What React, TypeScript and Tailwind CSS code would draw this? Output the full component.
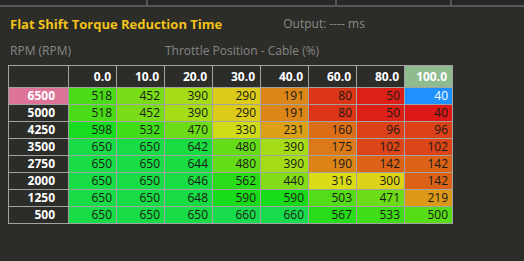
import React from "react";

const rpm = [6500, 5000, 4250, 3500, 2750, 2000, 1250, 500];
const tps = ["0.0", "10.0", "20.0", "30.0", "40.0", "60.0", "80.0", "100.0"];
const table: number[][] = [
  [518, 452, 390, 290, 191, 80, 50, 40],
  [518, 452, 390, 290, 191, 80, 50, 40],
  [598, 532, 470, 330, 231, 160, 96, 96],
  [650, 650, 642, 480, 390, 175, 102, 102],
  [650, 650, 644, 480, 390, 190, 142, 142],
  [650, 650, 646, 562, 440, 316, 300, 142],
  [650, 650, 648, 590, 590, 503, 471, 219],
  [650, 650, 650, 660, 660, 567, 533, 500],
];

const MIN = 40;
const MAX = 660;

// red (low) -> yellow -> green (high)
function cellColor(v: number) {
  const t = Math.max(0, Math.min(1, (v - MIN) / (MAX - MIN)));
  const hue = t * 136;
  return `hsl(${hue.toFixed(1)}, 80%, 48%)`;
}

export default function App() {
  const font = { fontFamily: '"Open Sans", "Noto Sans", sans-serif' };
  return (
    <div className="w-[524px] h-[261px] bg-[#2c2c28] overflow-hidden" style={font}>
      {/* tab strip */}
      <div className="flex h-[5px] bg-[#272725]">
        <div className="w-[148px] border-r-2 border-[#555555]" />
        <div className="w-[189px] border-r-2 border-[#555555]" />
        <div className="w-[115px] border-r-2 border-[#555555]" />
        <div className="flex-1" />
      </div>
      <div className="h-[2px] bg-[#575757]" />

      <div className="pl-[10px] pt-[8px] flex items-center h-[26px]">
        <span className="text-[13px] font-bold text-[#f2c21a] leading-[18px]">
          Flat Shift Torque Reduction Time
        </span>
        <span className="ml-[61px] text-[12px] text-[#8a8a88] leading-[18px]">Output: ---- ms</span>
      </div>

      <div className="pl-[10px] mt-[9px] flex items-center h-[18px] text-[12px] text-[#868684]">
        <span className="w-[155px]">RPM (RPM)</span>
        <span>Throttle Position - Cable (%)</span>
      </div>

      <table className="ml-[8px] mt-[5px] border-collapse text-[12px] leading-none">
        <thead>
          <tr className="h-[22px]">
            <th className="w-[60px] border border-[#a3a3a3] bg-[#2c2c28]" />
            {tps.map((t, i) => (
              <th
                key={t}
                className={`w-[48px] border border-[#a3a3a3] text-right pr-[5px] font-bold text-white ${
                  i === tps.length - 1 ? "bg-[#8fbc8f]" : "bg-[#2c2c28]"
                }`}
              >
                {t}
              </th>
            ))}
          </tr>
        </thead>
        <tbody>
          {rpm.map((r, ri) => (
            <tr key={r} className="h-[17px]">
              <td
                className={`border border-[#a3a3a3] text-right pr-[13px] font-bold text-white ${
                  ri === 0 ? "bg-[#dc7399]" : "bg-[#2c2c28]"
                }`}
              >
                {r}
              </td>
              {table[ri].map((v, ci) => {
                const selected = ri === 0 && ci === 7;
                return (
                  <td
                    key={ci}
                    className={`border border-[#a3a3a3] text-right pr-[4px] ${
                      selected ? "bg-[#1e90ff] text-white" : "text-[#1a1a14]"
                    }`}
                    style={selected ? undefined : { backgroundColor: cellColor(v) }}
                  >
                    {v}
                  </td>
                );
              })}
            </tr>
          ))}
        </tbody>
      </table>
    </div>
  );
}
